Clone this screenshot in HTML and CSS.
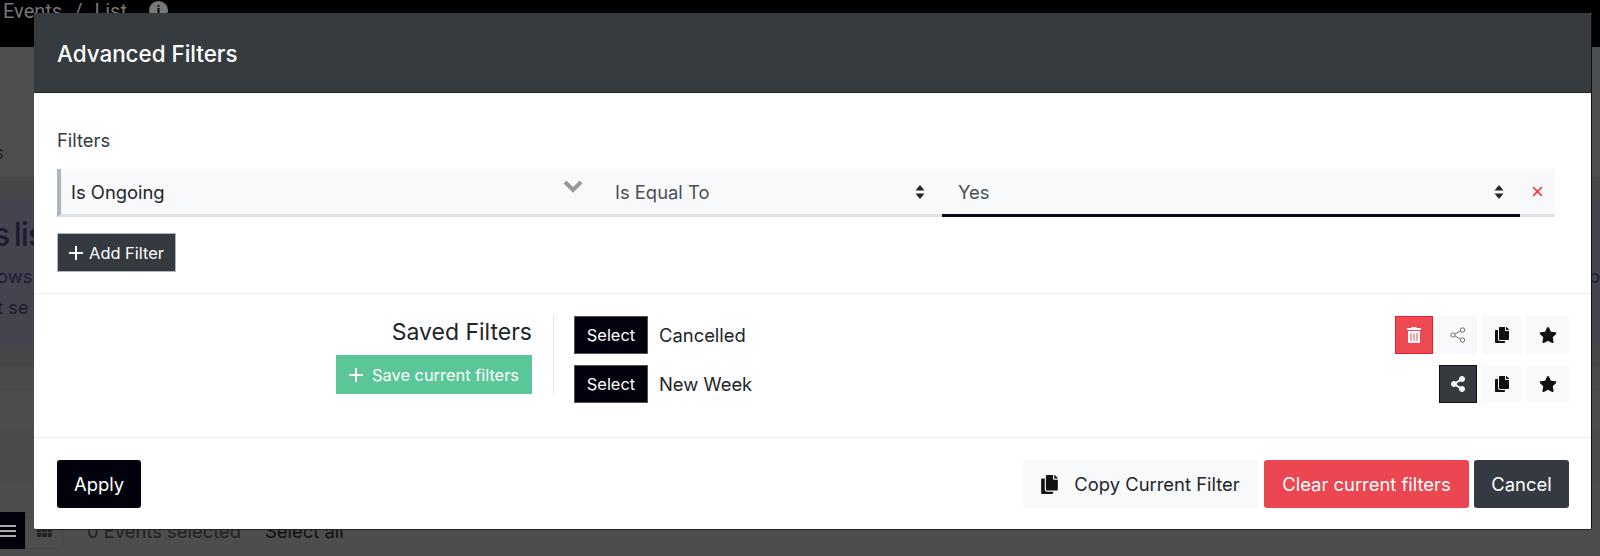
FILE: index.html
```html
<!DOCTYPE html>
<html>
<head>
	<meta charset="utf-8">
	<title>Advanced Filters</title>
	<link rel="stylesheet" href="styles.css">
</head>
<body>
	<!-- page behind the dialog -->
	<div class="page">
		<div class="topbar">
			<span class="crumb">Events</span>
			<span class="crumb-sep">/</span>
			<span class="crumb">List</span>
			<span class="crumb-info">i</span>
		</div>
		<div class="strip strip-tabs"><span class="tab-text">s</span></div>
		<div class="strip strip-gap"></div>
		<div class="strip strip-notice">
			<div class="notice-side">
				<div class="notice-title">s lis</div>
				<div class="notice-line">ows</div>
				<div class="notice-line">t se</div>
			</div>
			<div class="notice-right">b</div>
		</div>
		<div class="strip strip-gap"></div>
		<div class="strip strip-row-a"></div>
		<div class="strip strip-row-b"></div>
		<div class="strip strip-row-c"></div>
		<div class="toolbar">
			<span class="view-btn view-list">
				<svg viewBox="0 0 16 14" width="16" height="14"><path d="M0 2h16M0 7h16M0 12h16" stroke="#aaa" stroke-width="2"/></svg>
			</span>
			<span class="view-btn view-grid">
				<svg viewBox="0 0 16 14" width="15" height="13"><path d="M0 2a2 2 0 0 1 2-2h12a2 2 0 0 1 2 2v10a2 2 0 0 1-2 2H2a2 2 0 0 1-2-2z" fill="#222"/><path d="M0 5h16M0 9h16M5 4v10M11 4v10" stroke="#4d4d4d"/></svg>
			</span>
			<span class="selected-text">0 Events selected</span>
			<span class="select-all">Select all</span>
		</div>
	</div>

	<div class="modal">
		<div class="modal-header">Advanced Filters</div>

		<div class="modal-section filters">
			<div class="filters-label">Filters</div>
			<div class="filter-row">
				<div class="filter-field">
					<span>Is Ongoing</span>
					<svg class="chevron" viewBox="0 0 20 14" width="20" height="14"><path d="M2 3l8 8 8-8" fill="none" stroke="#999" stroke-width="4"/></svg>
				</div>
				<div class="filter-op">
					<span>Is Equal To</span>
					<svg class="sort" viewBox="0 0 10 14" width="10" height="14"><path d="M5 0l4.500 5.500h-9zM5 14l4.500-5.500h-9z" fill="#212529"/></svg>
				</div>
				<div class="filter-value">
					<span>Yes</span>
					<svg class="sort" viewBox="0 0 10 14" width="10" height="14"><path d="M5 0l4.500 5.500h-9zM5 14l4.500-5.500h-9z" fill="#212529"/></svg>
				</div>
				<div class="filter-remove">
					<svg viewBox="0 0 10 10" width="11" height="11"><path d="M1 1l8 8M9 1l-8 8" stroke="#ef3c46" stroke-width="1.500"/></svg>
				</div>
			</div>
			<button class="btn-add">
				<svg viewBox="0 0 14 14" width="14" height="14"><path d="M7 0v14M0 7h14" stroke="#fff" stroke-width="2"/></svg>
				Add Filter
			</button>
		</div>

		<div class="modal-section saved">
			<div class="saved-side">
				<div class="saved-title">Saved Filters</div>
				<button class="btn-save">
					<svg viewBox="0 0 14 14" width="14" height="14"><path d="M7 0v14M0 7h14" stroke="#fff" stroke-width="2"/></svg>
					Save current filters
				</button>
			</div>
			<div class="saved-list">
				<div class="saved-row">
					<button class="btn-select">Select</button>
					<span class="saved-name">Cancelled</span>
					<div class="saved-actions">
						<button class="icon-btn icon-delete">
							<svg viewBox="0 0 448 512" width="14" height="16"><path fill="#fff" d="M32 464a48 48 0 0 0 48 48h288a48 48 0 0 0 48-48V128H32zm272-256a16 16 0 0 1 32 0v224a16 16 0 0 1-32 0zm-96 0a16 16 0 0 1 32 0v224a16 16 0 0 1-32 0zm-96 0a16 16 0 0 1 32 0v224a16 16 0 0 1-32 0zM432 32H312l-9.400-18.700A24 24 0 0 0 281.100 0H166.800a23.720 23.720 0 0 0-21.400 13.300L136 32H16A16 16 0 0 0 0 48v32a16 16 0 0 0 16 16h416a16 16 0 0 0 16-16V48a16 16 0 0 0-16-16z"/></svg>
						</button>
						<button class="icon-btn">
							<svg viewBox="0 0 16 16" width="16" height="16"><g fill="none" stroke="#666" stroke-width="0.900"><circle cx="3" cy="8" r="2.200"/><circle cx="12.500" cy="3" r="2.200"/><circle cx="12.500" cy="13" r="2.200"/><path d="M5 7l5.500-3M5 9l5.500 3"/></g></svg>
						</button>
						<button class="icon-btn icon-copy">
							<svg viewBox="0 0 448 512" width="14" height="16"><path fill="#111" d="M320 448v40c0 13.255-10.745 24-24 24H24c-13.255 0-24-10.745-24-24V120c0-13.255 10.745-24 24-24h72v296c0 30.879 25.121 56 56 56h168zm0-344V0H152c-13.255 0-24 10.745-24 24v368c0 13.255 10.745 24 24 24h272c13.255 0 24-10.745 24-24V128H344c-13.200 0-24-10.800-24-24zm120.971-31.029L375.029 7.029A24 24 0 0 0 358.059 0H352v96h96v-6.059a24 24 0 0 0-7.029-16.970z"/></svg>
						</button>
						<button class="icon-btn icon-star">
							<svg viewBox="0 0 576 512" width="18" height="16"><path fill="#111" d="M259.300 17.800L194 150.200 47.900 171.500c-26.200 3.800-36.700 36.100-17.700 54.600l105.700 103-25 145.500c-4.500 26.300 23.200 46 46.400 33.700L288 439.600l130.700 68.700c23.200 12.200 50.900-7.400 46.400-33.700l-25-145.500 105.700-103c19-18.500 8.500-50.800-17.700-54.600L382 150.200 316.700 17.800c-11.700-23.600-45.600-23.900-57.400 0z"/></svg>
						</button>
					</div>
				</div>
				<div class="saved-row">
					<button class="btn-select">Select</button>
					<span class="saved-name">New Week</span>
					<div class="saved-actions">
						<button class="icon-btn icon-shared">
							<svg viewBox="0 0 448 512" width="14" height="16"><path fill="#fff" d="M352 320c-22.608 0-43.387 7.819-59.790 20.895l-102.486-64.054a96.551 96.551 0 0 0 0-41.683l102.486-64.054C308.613 184.181 329.392 192 352 192c53.019 0 96-42.981 96-96S405.019 0 352 0s-96 42.981-96 96c0 7.158.79 14.130 2.276 20.841L155.790 180.895C139.387 167.819 118.608 160 96 160c-53.019 0-96 42.981-96 96s42.981 96 96 96c22.608 0 43.387-7.819 59.790-20.895l102.486 64.054A96.301 96.301 0 0 0 256 416c0 53.019 42.981 96 96 96s96-42.981 96-96-42.981-96-96-96z"/></svg>
						</button>
						<button class="icon-btn icon-copy">
							<svg viewBox="0 0 448 512" width="14" height="16"><path fill="#111" d="M320 448v40c0 13.255-10.745 24-24 24H24c-13.255 0-24-10.745-24-24V120c0-13.255 10.745-24 24-24h72v296c0 30.879 25.121 56 56 56h168zm0-344V0H152c-13.255 0-24 10.745-24 24v368c0 13.255 10.745 24 24 24h272c13.255 0 24-10.745 24-24V128H344c-13.200 0-24-10.800-24-24zm120.971-31.029L375.029 7.029A24 24 0 0 0 358.059 0H352v96h96v-6.059a24 24 0 0 0-7.029-16.970z"/></svg>
						</button>
						<button class="icon-btn icon-star">
							<svg viewBox="0 0 576 512" width="18" height="16"><path fill="#111" d="M259.300 17.800L194 150.200 47.900 171.500c-26.200 3.800-36.700 36.100-17.700 54.600l105.700 103-25 145.500c-4.500 26.300 23.200 46 46.400 33.700L288 439.600l130.700 68.700c23.200 12.200 50.900-7.400 46.400-33.700l-25-145.500 105.700-103c19-18.500 8.500-50.800-17.700-54.600L382 150.200 316.700 17.800c-11.700-23.600-45.600-23.900-57.400 0z"/></svg>
						</button>
					</div>
				</div>
			</div>
		</div>

		<div class="modal-footer">
			<button class="btn btn-apply">Apply</button>
			<div class="footer-right">
				<button class="btn btn-copy">
					<svg viewBox="0 0 448 512" width="17" height="19"><path fill="#111" d="M320 448v40c0 13.255-10.745 24-24 24H24c-13.255 0-24-10.745-24-24V120c0-13.255 10.745-24 24-24h72v296c0 30.879 25.121 56 56 56h168zm0-344V0H152c-13.255 0-24 10.745-24 24v368c0 13.255 10.745 24 24 24h272c13.255 0 24-10.745 24-24V128H344c-13.200 0-24-10.800-24-24zm120.971-31.029L375.029 7.029A24 24 0 0 0 358.059 0H352v96h96v-6.059a24 24 0 0 0-7.029-16.970z"/></svg>
					Copy Current Filter
				</button>
				<button class="btn btn-clear">Clear current filters</button>
				<button class="btn btn-cancel">Cancel</button>
			</div>
		</div>
	</div>
</body>
</html>
```

FILE: styles.css
```css
html, body {
	margin: 0;
	height: 556px;
	overflow: hidden;
}

body {
	font-family: Inter, "Liberation Sans", sans-serif;
	font-size: 18.4px;
	color: #212529;
	background-color: #4d4d4d;
}

button {
	font-family: inherit;
	cursor: pointer;
}

/* page behind the dialog */
.page {
	height: 556px;
	overflow: hidden;
	display: flex;
	flex-direction: column;
}

.topbar {
	height: 47px;
	flex: none;
	background-color: #000;
	color: #777;
	font-family: Roboto, sans-serif;
	font-size: 20px;
	display: flex;
	align-items: flex-start;
	padding-left: 3px;
	box-sizing: border-box;
	line-height: 22px;
}

.crumb-sep {
	margin: 0 12px;
}

.crumb-info {
	width: 19px;
	height: 19px;
	border-radius: 50%;
	background-color: #777;
	color: #000;
	font-size: 13px;
	font-weight: 700;
	line-height: 19px;
	text-align: center;
	margin: 1px 0 0 22px;
}

.strip {
	flex: none;
}

.strip-tabs {
	height: 130px;
	background-color: #4e4e4e;
	overflow: hidden;
}

.tab-text {
	display: block;
	margin: 93px 0 0 -6px;
	line-height: 24px;
	color: #222;
}

.strip-gap {
	height: 22px;
	background-color: #474747;
}

.strip-notice {
	height: 146px;
	background-color: #44444f;
	display: flex;
	justify-content: space-between;
	overflow: hidden;
}

.notice-side {
	margin-top: 16px;
	color: #1c1c30;
	white-space: nowrap;
}

.notice-title {
	font-size: 32px;
	font-weight: 500;
	line-height: 40px;
	letter-spacing: -1px;
	word-spacing: -3px;
	margin-left: -7px;
}

.notice-line {
	line-height: 31px;
	margin-left: -3px;
}

.notice-title + .notice-line {
	margin-top: 6px;
}

.notice-right {
	line-height: 31px;
	color: #1c1c30;
	margin-top: 62px;
}

.strip-row-a {
	height: 23px;
	background-color: #4b4b4b;
	border-bottom: 1px solid #474747;
}

.strip-row-b {
	height: 37px;
	background-color: #4d4d4d;
	border-bottom: 1px solid #484848;
}

.strip-row-c {
	height: 56px;
	background-color: #4b4b4b;
}

.toolbar {
	flex: 1;
	display: flex;
	align-items: flex-start;
	padding-top: 27px;
	background-color: #4d4d4d;
	color: #222;
}

.view-btn {
	height: 37px;
	display: flex;
	align-items: center;
	justify-content: center;
	box-sizing: border-box;
}

.view-list {
	width: 25px;
	background-color: #02020c;
	justify-content: flex-end;
	padding-right: 9px;
}

.view-grid {
	width: 38px;
	border: 1px solid #484848;
}

.selected-text {
	margin-left: 24px;
	line-height: 38px;
}

.select-all {
	margin-left: 24px;
	line-height: 38px;
	color: #111;
}

/* dialog */
.modal {
	position: absolute;
	left: 34px;
	top: 13px;
	width: 1558px;
	height: 517px;
	box-sizing: border-box;
	background-color: #fff;
	border-radius: 2px;
	border-right: 1px solid #111;
	border-bottom: 1px solid #222;
	display: flex;
	flex-direction: column;
	overflow: hidden;
}

.modal-header {
	height: 80px;
	flex: none;
	box-sizing: border-box;
	padding-left: 23px;
	background-color: #363b3f;
	border-bottom: 1px solid #1f2529;
	color: #fff;
	font-size: 22.4px;
	font-weight: 500;
	line-height: 82px;
}

.modal-section {
	border-bottom: 1px solid #eceef0;
	box-sizing: border-box;
}

.filters {
	height: 201px;
	flex: none;
	padding: 37px 36px 0 23px;
}

.filters-label {
	line-height: 20px;
	color: #343a40;
}

.filter-row {
	height: 48px;
	margin-top: 19px;
	box-sizing: border-box;
	display: grid;
	grid-template-columns: 541px 340px 578px 1fr;
	background-color: #f8f9fa;
	border-left: 4px solid #adb5bd;
	border-bottom: 3px solid #dee2e6;
}

.filter-field, .filter-op, .filter-value {
	display: flex;
	align-items: center;
	justify-content: space-between;
}

.filter-field {
	padding: 0 19px 0 10px;
}

.chevron {
	margin-bottom: 12px;
}

.filter-op {
	padding: 0 17px 0 13px;
	color: #495057;
}

.filter-value {
	padding: 0 16px 0 16px;
	color: #495057;
	box-shadow: 0 3px 0 #0a0a14;
}

.filter-remove {
	display: flex;
	align-items: center;
	justify-content: center;
}

.btn-add {
	margin-top: 16px;
	width: 119px;
	height: 39px;
	padding: 0;
	display: flex;
	align-items: center;
	justify-content: center;
	gap: 6px;
	background-color: #343a40;
	border: 1px solid #adb5bd;
	color: #fff;
	font-size: 16.4px;
}

.saved {
	height: 144px;
	flex: none;
	display: flex;
	padding: 22px 22px 0 0;
}

.saved-side {
	width: 520px;
	height: 78px;
	flex: none;
	padding-right: 21px;
	box-sizing: border-box;
	border-right: 1px solid #e3e5e7;
	display: flex;
	flex-direction: column;
	align-items: flex-end;
	justify-content: space-between;
}

.saved-title {
	font-size: 23px;
	line-height: 32px;
}

.btn-save {
	width: 196px;
	height: 39px;
	padding: 0;
	display: flex;
	align-items: center;
	justify-content: center;
	gap: 9px;
	background-color: #5bc698;
	border: 1px solid #5bc698;
	color: #fff;
	font-size: 16.4px;
}

.saved-list {
	flex: 1;
	padding-left: 20px;
	display: flex;
	flex-direction: column;
	gap: 11px;
}

.saved-row {
	height: 38px;
	display: flex;
	align-items: center;
}

.btn-select {
	width: 74px;
	height: 38px;
	padding: 0;
	background-color: #02020c;
	border: 1px solid #555;
	color: #fff;
	font-size: 16.4px;
}

.saved-name {
	margin-left: 11px;
	color: #212529;
}

.saved-actions {
	margin-left: auto;
	display: flex;
	gap: 5px;
}

.icon-btn {
	width: 38px;
	height: 38px;
	padding: 0;
	display: flex;
	align-items: center;
	justify-content: center;
	background-color: #f8f9fa;
	border: none;
}

.icon-copy {
	width: 39px;
}

.icon-star {
	width: 43px;
}

.icon-delete {
	background-color: #ef4a54;
	border: 1px solid #ef1c2c;
	margin-right: 1px;
}

.icon-shared {
	background-color: #343a40;
	border: 1px solid #111;
}

.modal-footer {
	flex: 1;
	display: flex;
	align-items: flex-start;
	justify-content: space-between;
	padding: 22px 22px 0 23px;
}

.footer-right {
	display: flex;
	gap: 5px;
}

.btn {
	height: 48px;
	padding: 0;
	border-radius: 3px;
	border: none;
	font-size: 18.4px;
	color: #fff;
	display: flex;
	align-items: center;
	justify-content: center;
}

.btn-apply {
	width: 84px;
	background-color: #02020c;
}

.btn-copy {
	width: 235px;
	gap: 16px;
	margin-right: 1px;
	background-color: #f8f9fa;
	color: #212529;
}

.btn-clear {
	width: 205px;
	background-color: #ec4650;
}

.btn-cancel {
	width: 95px;
	background-color: #343a40;
}
```
